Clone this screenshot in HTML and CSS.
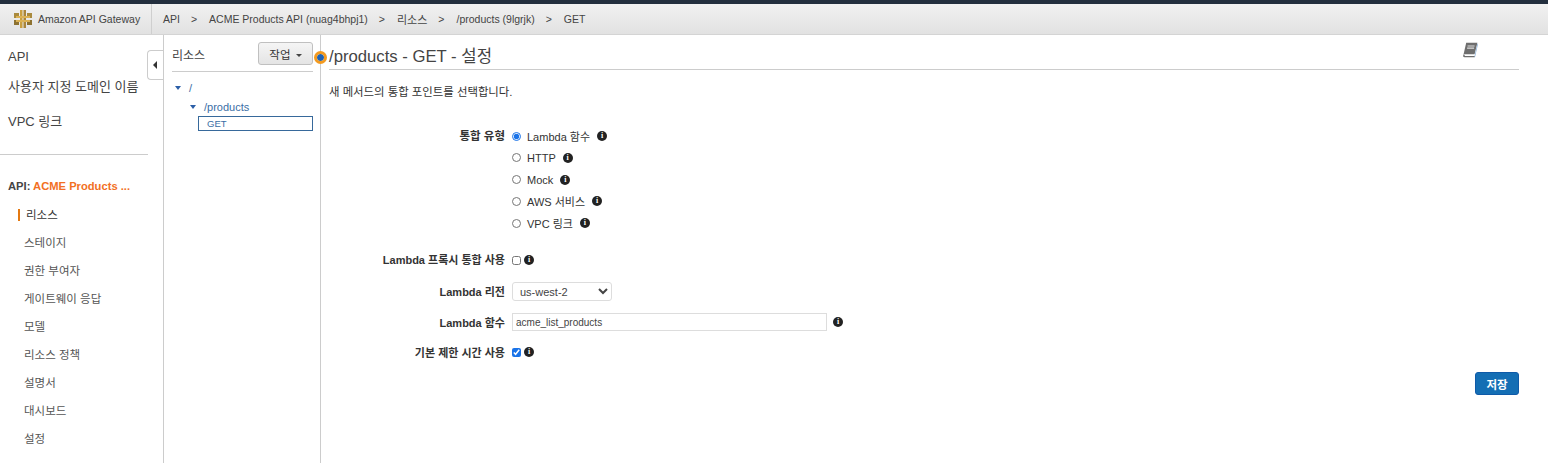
FILE: index.html
```html
<!DOCTYPE html>
<html lang="ko">
<head>
    <meta charset="UTF-8">
    <title>Amazon API Gateway</title>
    <link rel="stylesheet" href="styles.css">
</head>
<body>

<div class="top-strip"></div>

<header class="crumb-bar">
    <div class="brand">
        <svg class="brand-icon" width="18" height="18" viewBox="0 0 18 18">
            <rect x="0" y="3" width="5" height="5" fill="#a98a3e"/>
            <rect x="13" y="3" width="5" height="5" fill="#a98a3e"/>
            <rect x="0" y="10" width="5" height="5" fill="#8d7231"/>
            <rect x="13" y="10" width="5" height="5" fill="#8d7231"/>
            <rect x="6" y="0" width="2.5" height="18" fill="#c99f3f"/>
            <rect x="9.5" y="0" width="2.5" height="18" fill="#a9853a"/>
            <rect x="2" y="6" width="14" height="2" fill="#dcb254"/>
            <rect x="2" y="10" width="14" height="2" fill="#dcb254"/>
        </svg>
        <span>Amazon API Gateway</span>
    </div>
    <nav class="crumbs">
        <span>API</span><span class="sep">&gt;</span>
        <span>ACME Products API (nuag4bhpj1)</span><span class="sep">&gt;</span>
        <span class="ko">리소스</span><span class="sep">&gt;</span>
        <span>/products (9lgrjk)</span><span class="sep">&gt;</span>
        <span>GET</span>
    </nav>
</header>

<div class="layout">
    <aside class="sidebar">
        <ul class="top-nav">
            <li class="top-api">API</li>
            <li class="top-domain">사용자 지정 도메인 이름</li>
            <li class="top-vpc">VPC 링크</li>
        </ul>
        <div class="api-title">API: <span>ACME Products ...</span></div>
        <ul class="side-nav">
            <li class="active">리소스</li>
            <li>스테이지</li>
            <li>권한 부여자</li>
            <li>게이트웨이 응답</li>
            <li>모델</li>
            <li>리소스 정책</li>
            <li>설명서</li>
            <li>대시보드</li>
            <li>설정</li>
        </ul>
        <button class="collapse-tab"><i></i></button>
    </aside>

    <section class="resources">
        <div class="res-head">
            <span>리소스</span>
            <button class="action-btn">작업 <i></i></button>
        </div>
        <div class="tree">
            <div class="tree-row"><i class="arrow"></i>/</div>
            <div class="tree-row child"><i class="arrow"></i>/products</div>
            <div class="tree-method">GET</div>
        </div>
        <span class="status-dot"></span>
    </section>

    <main class="content">
        <div class="title-row">
            <h1>/products - GET - 설정</h1>
            <svg class="book-icon" width="16" height="16" viewBox="0 0 16 16">
                <path d="M4.2 .8h11.2l-2.8 11.4H1.6z" fill="#6e6e6e"/>
                <path d="M15.4 1.4l-2.6 11.6-.6 2.2h.8l3-13z" fill="#8fb4dc"/>
                <path d="M1.6 12.2c-.9 1.8-.5 3 1 3h9.8l.3-1.1H3.4c-.8 0-1-.6-.6-1.2z" fill="#6e6e6e"/>
                <path d="M5.6 4h7M5.1 6.2h7" stroke="#dedede" stroke-width="1.2"/>
            </svg>
        </div>
        <p class="intro">새 메서드의 통합 포인트를 선택합니다.</p>

        <form class="form">
            <div class="form-row type-row">
                <label class="form-label">통합 유형</label>
                <div class="radio-list">
                    <label class="radio"><input type="radio" name="type" checked>Lambda 함수<i class="info">i</i></label>
                    <label class="radio"><input type="radio" name="type">HTTP<i class="info">i</i></label>
                    <label class="radio"><input type="radio" name="type">Mock<i class="info">i</i></label>
                    <label class="radio"><input type="radio" name="type">AWS 서비스<i class="info">i</i></label>
                    <label class="radio"><input type="radio" name="type">VPC 링크<i class="info">i</i></label>
                </div>
            </div>
            <div class="form-row proxy-row">
                <label class="form-label">Lambda 프록시 통합 사용</label>
                <input type="checkbox"><i class="info tight">i</i>
            </div>
            <div class="form-row region-row">
                <label class="form-label">Lambda 리전</label>
                <select class="region"><option>us-west-2</option></select>
            </div>
            <div class="form-row fn-row">
                <label class="form-label">Lambda 함수</label>
                <input class="fn-input" type="text" value="acme_list_products"><i class="info fn-info">i</i>
            </div>
            <div class="form-row timeout-row">
                <label class="form-label">기본 제한 시간 사용</label>
                <input type="checkbox" checked><i class="info tight">i</i>
            </div>
            <div class="form-actions">
                <button type="button" class="save-btn">저장</button>
            </div>
        </form>
    </main>
</div>

</body>
</html>
```

FILE: styles.css
```css
* {
    box-sizing: border-box;
}
html, body {
    height: 100%;
}
body {
    margin: 0;
    overflow: hidden;
    background: #fff;
    color: #444;
    font-family: "Liberation Sans", "Noto Sans CJK KR", sans-serif;
    font-size: 11px;
}
ul {
    list-style: none;
    margin: 0;
    padding: 0;
}

/* top bars */
.top-strip {
    height: 4px;
    background: #232f3e;
}
.crumb-bar {
    display: flex;
    height: 31px;
    background: linear-gradient(#f1f1f1, #e2e2e2);
    border-bottom: 1px solid #d4d4d4;
    color: #444;
    font-size: 10.5px;
}
.brand {
    display: flex;
    align-items: center;
    gap: 6px;
    width: 152px;
    padding-left: 14px;
    border-right: 1px solid #cfcfcf;
}
.crumbs {
    display: flex;
    align-items: center;
    padding-left: 11px;
}
.crumbs .ko {
    font-size: 11px;
}
.sep {
    margin: 0 12px 0 11px;
}

.layout {
    display: flex;
    height: 428px;
}

/* left nav */
.sidebar {
    position: relative;
    flex: 0 0 164px;
    border-right: 1px solid #ccc;
    padding: 0 0 0 8px;
}
.top-nav {
    width: 140px;
    margin-left: -8px;
    padding-left: 8px;
    height: 119px;
    border-bottom: 1px solid #ccc;
    font-size: 13px;
    color: #444;
    box-sizing: content-box;
}
.top-api {
    padding-top: 14px;
    line-height: 16px;
}
.top-domain {
    padding-top: 14px;
    line-height: 16px;
}
.top-vpc {
    padding-top: 19px;
    line-height: 16px;
}
.api-title {
    margin-top: 24px;
    font-size: 11.2px;
    font-weight: bold;
    line-height: 14px;
    color: #444;
}
.api-title span {
    color: #f27024;
}
.side-nav {
    margin-top: 8px;
    padding-left: 16px;
}
.side-nav li {
    height: 28px;
    line-height: 28px;
    font-size: 11.5px;
    color: #555;
}
.side-nav .active {
    color: #333;
    margin-left: -6px;
    padding-left: 8px;
    background: linear-gradient(#e47911, #e47911) no-repeat 0 8px / 2px 12px;
}
.collapse-tab {
    position: absolute;
    top: 15px;
    right: 0;
    width: 16px;
    height: 30px;
    padding: 0;
    background: #fff;
    border: 1px solid #ccc;
    border-right: none;
    border-radius: 4px 0 0 4px;
}
.collapse-tab i {
    display: block;
    margin-left: 5px;
    width: 0;
    height: 0;
    border: 4px solid transparent;
    border-left: none;
    border-right-color: #333;
}

/* resource tree */
.resources {
    position: relative;
    flex: 0 0 157px;
    border-right: 1px solid #ccc;
    padding: 7px 7px 0 8px;
}
.res-head {
    display: flex;
    justify-content: space-between;
    align-items: flex-start;
    height: 30px;
    border-bottom: 1px solid #ccc;
    line-height: 28px;
    font-size: 12px;
    color: #444;
}
.action-btn {
    width: 55px;
    height: 23px;
    padding: 0;
    border: 1px solid #c0c0c0;
    border-radius: 3px;
    background: linear-gradient(#f5f5f5, #e4e4e4);
    color: #333;
    font: 11.5px "Liberation Sans", "Noto Sans CJK KR", sans-serif;
}
.action-btn i {
    display: inline-block;
    margin-left: 2px;
    vertical-align: 2px;
    border: 3px solid transparent;
    border-bottom: none;
    border-top: 3px solid #444;
}
.tree {
    padding-top: 7px;
    color: #3a6ea5;
    font-size: 11px;
}
.tree-row {
    display: flex;
    align-items: center;
    height: 18px;
    padding-left: 3px;
}
.tree-row.child {
    margin-top: 1px;
    padding-left: 18px;
}
.arrow {
    width: 0;
    height: 0;
    margin-right: 8px;
    border: 3.5px solid transparent;
    border-bottom: none;
    border-top: 4px solid #2b5ea7;
}
.tree-method {
    margin-left: 26px;
    height: 15px;
    line-height: 13px;
    padding-left: 8px;
    border: 1px solid #37699b;
    font-size: 9.5px;
}
.status-dot {
    position: absolute;
    top: 16px;
    right: -7px;
    width: 13px;
    height: 13px;
    border-radius: 50%;
    background: #1f63b5;
    background-clip: padding-box;
    border: 3px solid #f39a1f;
}

/* main panel */
.content {
    flex: 1;
    padding: 9px 29px 0 8px;
}
.title-row {
    position: relative;
    height: 26px;
    border-bottom: 1px solid #ccc;
}
.title-row h1 {
    margin: 0;
    font-size: 16.7px;
    font-weight: normal;
    line-height: 25px;
    color: #444;
}
.book-icon {
    position: absolute;
    top: -2px;
    right: 41px;
}
.intro {
    margin: 15px 0 0;
    line-height: 14px;
    font-size: 11.4px;
    color: #333;
}
.form {
    margin-top: 29px;
}
.form-row {
    display: flex;
    align-items: center;
}
.form-label {
    flex: 0 0 176px;
    margin-right: 7px;
    text-align: right;
    font-weight: bold;
    font-size: 11px;
    color: #333;
}
.type-row {
    align-items: flex-start;
}
.type-row .form-label {
    line-height: 16px;
    font-size: 11.5px;
}
.radio-list {
    display: flex;
    flex-direction: column;
    gap: 5.75px;
}
.radio {
    display: flex;
    align-items: center;
    height: 16px;
    color: #333;
    font-size: 11px;
}
.radio input {
    width: 9px;
    height: 9px;
    margin: 0 6px 0 0;
    accent-color: #1a73e8;
}
.info {
    display: inline-block;
    width: 10px;
    height: 10px;
    margin-left: 7px;
    border-radius: 50%;
    background: #222;
    color: #fff;
    font: bold 8px/10px "Liberation Serif", serif;
    text-align: center;
}
.info.tight {
    margin-left: 3px;
}
.form-row input[type="checkbox"] {
    width: 9px;
    height: 9px;
    margin: 0;
    accent-color: #1a73e8;
}
.proxy-row {
    margin-top: 21px;
}
.proxy-row .form-label,
.region-row .form-label {
    position: relative;
    top: -1px;
}
.region-row {
    margin-top: 14px;
}
.region {
    width: 100px;
    height: 19px;
    padding: 0 0 0 3px;
    border: 1px solid #ddd;
    border-radius: 3px;
    background: #fff;
    color: #444;
    font: 11px "Liberation Sans", sans-serif;
}
.fn-row {
    margin-top: 12px;
}
.fn-input {
    width: 315px;
    height: 18px;
    padding: 0 3px;
    border: 1px solid #ddd;
    color: #444;
    font: 10px "Liberation Sans", sans-serif;
}
.fn-info {
    margin-left: 6px;
}
.timeout-row {
    margin-top: 13px;
}
.form-actions {
    display: flex;
    justify-content: flex-end;
    margin-top: 12px;
}
.save-btn {
    width: 44px;
    height: 23px;
    padding: 0;
    border: 1px solid #0f5aa8;
    border-radius: 3px;
    background: #146eb4;
    color: #fff;
    font: bold 11.5px "Liberation Sans", "Noto Sans CJK KR", sans-serif;
}
```
